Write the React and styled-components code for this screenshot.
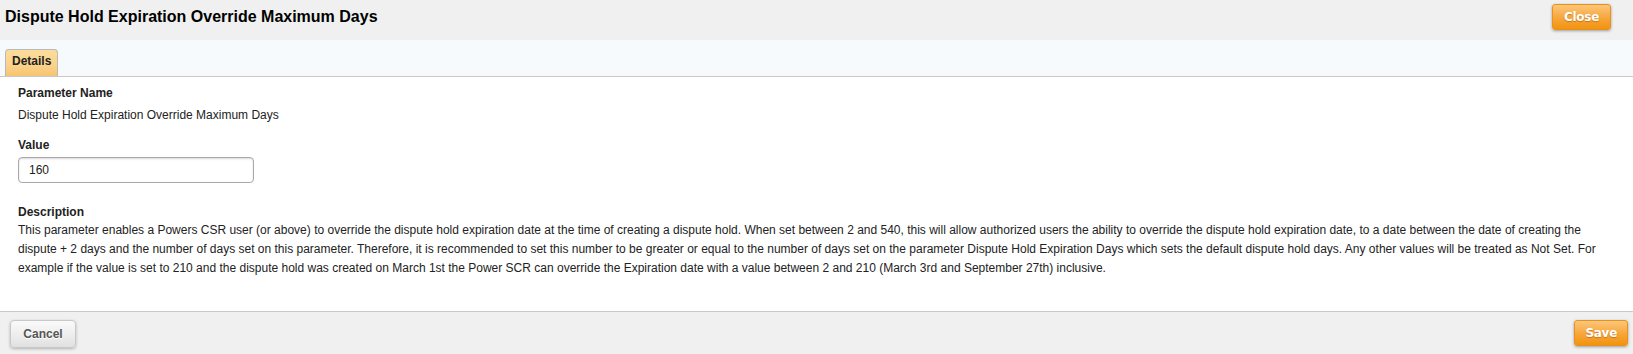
import React from 'react';
import styled, { createGlobalStyle } from 'styled-components';

const GlobalStyle = createGlobalStyle`
  html, body {
    margin: 0;
    padding: 0;
    background: #fff;
  }

  body {
    font-family: 'Liberation Sans', Arial, sans-serif;
    color: #222;
  }
`;

const Page = styled.div`
  display: flex;
  flex-direction: column;
  width: 1633px;
  height: 354px;
`;

const Header = styled.div`
  display: flex;
  align-items: flex-start;
  justify-content: space-between;
  height: 40px;
  padding: 0 22px 0 5px;
  background: #f0f0f0;
  box-sizing: border-box;
`;

const Title = styled.h1`
  margin: 8px 0 0;
  font-size: 16px;
  font-weight: bold;
  color: #000;
`;

const OrangeButton = styled.button`
  height: 26px;
  padding: 0 ${(p) => p.$pad || 10}px;
  margin-top: ${(p) => p.$top || 0}px;
  border: 1px solid #e8921a;
  border-radius: 3px;
  background: linear-gradient(to bottom, #fcc67a 0%, #f7a53a 55%, #f2930f 100%);
  box-shadow: 0 1px 3px rgba(0, 0, 0, 0.35);
  color: #fff;
  font-family: 'DejaVu Sans', sans-serif;
  font-size: 12px;
  font-weight: bold;
  letter-spacing: -0.3px;
  text-shadow: 0 1px 1px rgba(150, 80, 0, 0.5);
  cursor: pointer;
`;

const TabBar = styled.div`
  display: flex;
  align-items: flex-end;
  height: 37px;
  padding-left: 5px;
  background: #f6fafd;
  border-bottom: 1px solid #c8c8c8;
  box-sizing: border-box;
`;

const Tab = styled.div`
  height: 27px;
  padding: 4px 6px 0;
  display: flex;
  align-items: flex-start;
  box-sizing: border-box;
  border: 1px solid #b9b9b9;
  border-bottom: none;
  border-radius: 4px 4px 0 0;
  background: linear-gradient(to bottom, #fcdc9b 0%, #fad28a 60%, #f7c46e 100%);
  font-size: 12px;
  font-weight: bold;
  color: #222;
`;

const Content = styled.div`
  flex: 1;
  padding: 8px 33px 0 18px;
  box-sizing: border-box;
`;

const Field = styled.div`
  margin-bottom: ${(p) => p.$gap || 0}px;
`;

const Label = styled.div`
  font-size: 12px;
  font-weight: bold;
  line-height: 16px;
  color: #222;
  margin-bottom: ${(p) => p.$gap || 5}px;
`;

const Text = styled.div`
  font-size: 12px;
  line-height: 19px;
  color: #222;
`;

const Input = styled.input`
  width: 236px;
  height: 26px;
  padding: 0 10px;
  box-sizing: border-box;
  border: 1px solid #a9a9a9;
  border-radius: 4px;
  box-shadow: inset 0 1px 2px rgba(0, 0, 0, 0.15);
  font-family: 'Liberation Sans', Arial, sans-serif;
  font-size: 12px;
  color: #222;
  outline: none;
`;

const Footer = styled.div`
  display: flex;
  align-items: flex-start;
  justify-content: space-between;
  height: 43px;
  padding: 8px 5px 0 10px;
  box-sizing: border-box;
  background: #f0f0f0;
  border-top: 1px solid #c8c8c8;
`;

const GrayButton = styled.button`
  height: 28px;
  width: 66px;
  border: 1px solid #c8c8c8;
  border-radius: 4px;
  background: linear-gradient(to bottom, #fafafa 0%, #ececec 60%, #e0e0e0 100%);
  box-shadow: 0 1px 3px rgba(0, 0, 0, 0.25);
  color: #555;
  font-family: 'Liberation Sans', Arial, sans-serif;
  font-size: 12px;
  font-weight: bold;
  text-shadow: 0 1px 0 #fff;
  cursor: pointer;
`;

const description =
  'This parameter enables a Powers CSR user (or above) to override the dispute hold expiration date at the time of creating a dispute hold. When set between 2 and 540, this will allow authorized users the ability to override the dispute hold expiration date, to a date between the date of creating the dispute + 2 days and the number of days set on this parameter. Therefore, it is recommended to set this number to be greater or equal to the number of days set on the parameter Dispute Hold Expiration Days which sets the default dispute hold days. Any other values will be treated as Not Set. For example if the value is set to 210 and the dispute hold was created on March 1st the Power SCR can override the Expiration date with a value between 2 and 210 (March 3rd and September 27th) inclusive.';

const App = () => {
  const [value, setValue] = React.useState('160');

  return (
    <Page>
      <GlobalStyle />
      <Header>
        <Title>Dispute Hold Expiration Override Maximum Days</Title>
        <OrangeButton $top={4} $pad={11}>Close</OrangeButton>
      </Header>
      <TabBar>
        <Tab>Details</Tab>
      </TabBar>
      <Content>
        <Field $gap={12}>
          <Label $gap={5}>Parameter Name</Label>
          <Text>Dispute Hold Expiration Override Maximum Days</Text>
        </Field>
        <Field $gap={21}>
          <Label $gap={4}>Value</Label>
          <Input value={value} onChange={(e) => setValue(e.target.value)} />
        </Field>
        <Field>
          <Label $gap={1}>Description</Label>
          <Text>{description}</Text>
        </Field>
      </Content>
      <Footer>
        <GrayButton>Cancel</GrayButton>
        <OrangeButton $pad={10}>Save</OrangeButton>
      </Footer>
    </Page>
  );
};

export default App;
